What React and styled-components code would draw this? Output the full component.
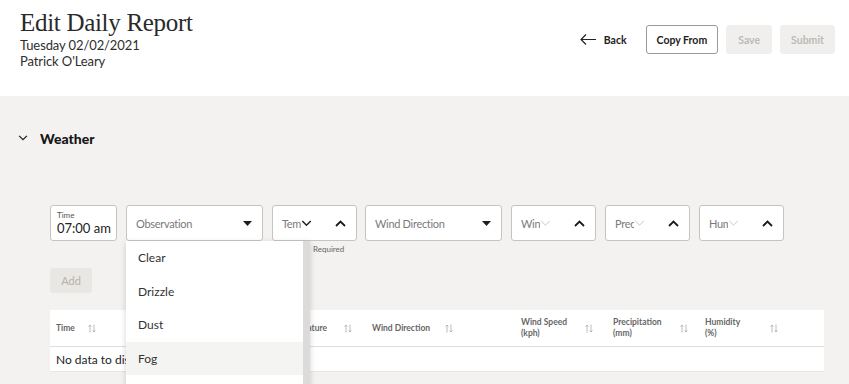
import React from "react"
import styled, { createGlobalStyle } from "styled-components"

const GlobalStyle = createGlobalStyle`
  html, body {
    margin: 0;
    padding: 0;
    background: #f3f2f0;
    font-family: Lato, "Noto Sans", sans-serif;
    color: #2b2b2b;
  }
`

const Page = styled.div`
  width: 849px;
  height: 384px;
  overflow: hidden;
  background: #f3f2f0;
`

const Header = styled.header`
  height: 96px;
  box-sizing: border-box;
  background: #fff;
  display: flex;
  justify-content: space-between;
  align-items: flex-start;
  padding: 9px 14px 0 20px;
`

const Title = styled.h1`
  margin: 0;
  font-family: "Liberation Serif", serif;
  font-weight: 400;
  font-size: 25px;
  letter-spacing: -0.3px;
  line-height: 28px;
  color: #2a2a2a;
`

const Meta = styled.div`
  font-size: 13px;
  letter-spacing: -0.1px;
  line-height: 16px;
  color: #2e2e2e;
`

const Actions = styled.div`
  display: flex;
  align-items: center;
  gap: 8px;
  margin-top: 16px;
`

const BackLink = styled.a`
  display: flex;
  align-items: center;
  gap: 8px;
  font-size: 10.5px;
  font-weight: 700;
  color: #222;
  margin-right: 11px;
  cursor: pointer;
`

const Button = styled.button`
  height: 29px;
  padding: 0 ${(p) => p.$pad || 12}px;
  font-family: inherit;
  font-size: 10.5px;
  font-weight: 700;
  border-radius: 3px;
  border: 1px solid ${(p) => (p.$disabled ? "#f0efee" : "#9a9a9a")};
  background: ${(p) => (p.$disabled ? "#f0efee" : "#fff")};
  color: ${(p) => (p.$disabled ? "#bdbab6" : "#222")};
`

const Main = styled.main`
  padding: 32px 25px 0 18px;
`

const SectionHeader = styled.div`
  display: flex;
  align-items: center;
  gap: 12px;
  height: 20px;
  font-size: 14px;
  font-weight: 900;
  color: #161616;
`

const SectionBody = styled.div`
  margin-left: 32px;
  margin-top: 57px;
`

const FieldRow = styled.div`
  display: flex;
  align-items: flex-start;
  gap: 9px;
`

const FieldColumn = styled.div`
  position: relative;
  display: flex;
  flex-direction: column;
`

const Field = styled.div`
  box-sizing: border-box;
  flex: none;
  width: ${(p) => p.$w}px;
  height: 36px;
  margin-left: ${(p) => p.$shift || 0}px;
  background: #fff;
  border: 1px solid #c6c4c1;
  border-radius: 3px;
  display: flex;
  align-items: center;
  padding: 0 10px 0 9px;
  font-size: 11px;
  letter-spacing: -0.3px;
  color: #777;
`

const StackedField = styled(Field)`
  flex-direction: column;
  align-items: flex-start;
  justify-content: center;
  padding: 0 6px;
  letter-spacing: 0;
`

const SmallLabel = styled.span`
  font-size: 8px;
  line-height: 10px;
  color: #555;
`

const Value = styled.span`
  font-size: 13px;
  line-height: 16px;
  color: #222;
  white-space: nowrap;
`

const Placeholder = styled.span`
  flex: 1;
  color: #7a7a7a;
  white-space: nowrap;
`

const Clipped = styled.span`
  width: 19px;
  overflow: hidden;
  white-space: nowrap;
  color: #7a7a7a;
`

const Spacer = styled.span`
  flex: 1;
`

const Helper = styled.span`
  font-size: 8px;
  line-height: 10px;
  color: #666;
  padding: 3px 0 0 41px;
`

const Menu = styled.ul`
  position: absolute;
  top: 36px;
  left: 0;
  z-index: 5;
  width: 184px;
  height: 160px;
  margin: 0;
  padding: 0;
  list-style: none;
  background: #fff;
  box-shadow: 0 2px 6px rgba(0, 0, 0, 0.18);
  border-right: 7px solid #dcdbd9;
  box-sizing: border-box;
`

const MenuItem = styled.li`
  height: 33.5px;
  display: flex;
  align-items: center;
  padding-left: 12px;
  font-size: 12px;
  color: #333;
  background: ${(p) => (p.$active ? "#f4f4f3" : "#fff")};
`

const AddButton = styled.button`
  display: block;
  margin-top: 14px;
  width: 42px;
  height: 25px;
  border: none;
  border-radius: 3px;
  background: #e9e7e4;
  color: #b5b1ab;
  font-family: inherit;
  font-size: 11px;
`

const Table = styled.div`
  margin-top: 17px;
  background: #fff;
`

const HeadRow = styled.div`
  display: grid;
  grid-template-columns: 223px 93px 149px 92px 92px 125px;
  height: 36px;
  border-bottom: 1px solid #dedede;
`

const HeadCell = styled.div`
  display: flex;
  align-items: center;
  padding-left: 6px;
  font-size: 8.5px;
  font-weight: 700;
  line-height: 11px;
  color: #666;
`

const HeadLabel = styled.span`
  flex: none;
  width: ${(p) => p.$w}px;
`

const BodyRow = styled.div`
  height: 24px;
  display: flex;
  align-items: center;
  padding-left: 6px;
  font-size: 12px;
  color: #222;
  border-bottom: 1px solid #e6e6e6;
`

const Triangle = () => (
  <svg width="9" height="5" viewBox="0 0 9 5">
    <path d="M0 0h9L4.5 5z" fill="#1e1e1e" />
  </svg>
)

const ChevronDown = ({ color = "#222", width = 1.6, size = 11 }) => (
  <svg width={size} height={size * 0.6} viewBox="0 0 11 7" fill="none">
    <path d="M1 1l4.5 4.5L10 1" stroke={color} strokeWidth={width} />
  </svg>
)

const ChevronUp = () => (
  <svg width="11" height="7" viewBox="0 0 11 7" fill="none">
    <path d="M1 6l4.5-4.5L10 6" stroke="#1a1a1a" strokeWidth="1.8" />
  </svg>
)

const BackArrow = () => (
  <svg width="16" height="11" viewBox="0 0 16 11" fill="none">
    <path d="M1 5.5h15M6 0.5l-5 5 5 5" stroke="#222" strokeWidth="1.2" />
  </svg>
)

const SortIcon = () => (
  <svg width="8" height="9" viewBox="0 0 8 9" fill="none">
    <path d="M2 8.5V1M0.5 2.5L2 1l1.5 1.5M6 0.5V8M4.5 6.5L6 8l1.5-1.5" stroke="#aaa" strokeWidth="0.8" />
  </svg>
)

function NumberField({ label, dark }) {
  return (
    <Field $w={85}>
      <Clipped>{label}</Clipped>
      <ChevronDown color={dark ? "#222" : "#c4c4c4"} width={dark ? 1.6 : 1} />
      <Spacer />
      <ChevronUp />
    </Field>
  )
}

const columns = [
  { lines: ["Time"], w: 32 },
  { lines: ["Temperature"], w: 65 },
  { lines: ["Wind Direction"], w: 73 },
  { lines: ["Wind Speed", "(kph)"], w: 64 },
  { lines: ["Precipitation", "(mm)"], w: 67 },
  { lines: ["Humidity", "(%)"], w: 65 },
]

const options = ["Clear", "Drizzle", "Dust", "Fog", "Hail"]

export default function App() {
  return (
    <Page>
      <GlobalStyle />
      <Header>
        <div>
          <Title>Edit Daily Report</Title>
          <Meta>Tuesday 02/02/2021</Meta>
          <Meta>Patrick O'Leary</Meta>
        </div>
        <Actions>
          <BackLink>
            <BackArrow />
            Back
          </BackLink>
          <Button $pad={10}>Copy From</Button>
          <Button $pad={11} $disabled>Save</Button>
          <Button $pad={10} $disabled>Submit</Button>
        </Actions>
      </Header>
      <Main>
        <SectionHeader>
          <ChevronDown size={10} width={1.5} />
          Weather
        </SectionHeader>
        <SectionBody>
          <FieldRow>
            <StackedField $w={67}>
              <SmallLabel>Time</SmallLabel>
              <Value>07:00 am</Value>
            </StackedField>
            <FieldColumn>
              <Field $w={137}>
                <Placeholder>Observation</Placeholder>
                <Triangle />
              </Field>
              <Menu>
                {options.map((o) => (
                  <MenuItem key={o} $active={o === "Fog"}>
                    {o}
                  </MenuItem>
                ))}
              </Menu>
            </FieldColumn>
            <FieldColumn>
              <NumberField label="Temperature" dark />
              <Helper>Required</Helper>
            </FieldColumn>
            <Field $w={137} $shift={-1}>
              <Placeholder>Wind Direction</Placeholder>
              <Triangle />
            </Field>
            <NumberField label="Wind Speed" />
            <NumberField label="Precipitation" />
            <NumberField label="Humidity" />
          </FieldRow>
          <AddButton>Add</AddButton>
          <Table>
            <HeadRow>
              {columns.map((c) => (
                <HeadCell key={c.lines[0]}>
                  <HeadLabel $w={c.w}>
                    {c.lines.map((l, i) => (
                      <React.Fragment key={l}>
                        {i > 0 && <br />}
                        {l}
                      </React.Fragment>
                    ))}
                  </HeadLabel>
                  <SortIcon />
                </HeadCell>
              ))}
            </HeadRow>
            <BodyRow>No data to display.</BodyRow>
          </Table>
        </SectionBody>
      </Main>
    </Page>
  )
}
